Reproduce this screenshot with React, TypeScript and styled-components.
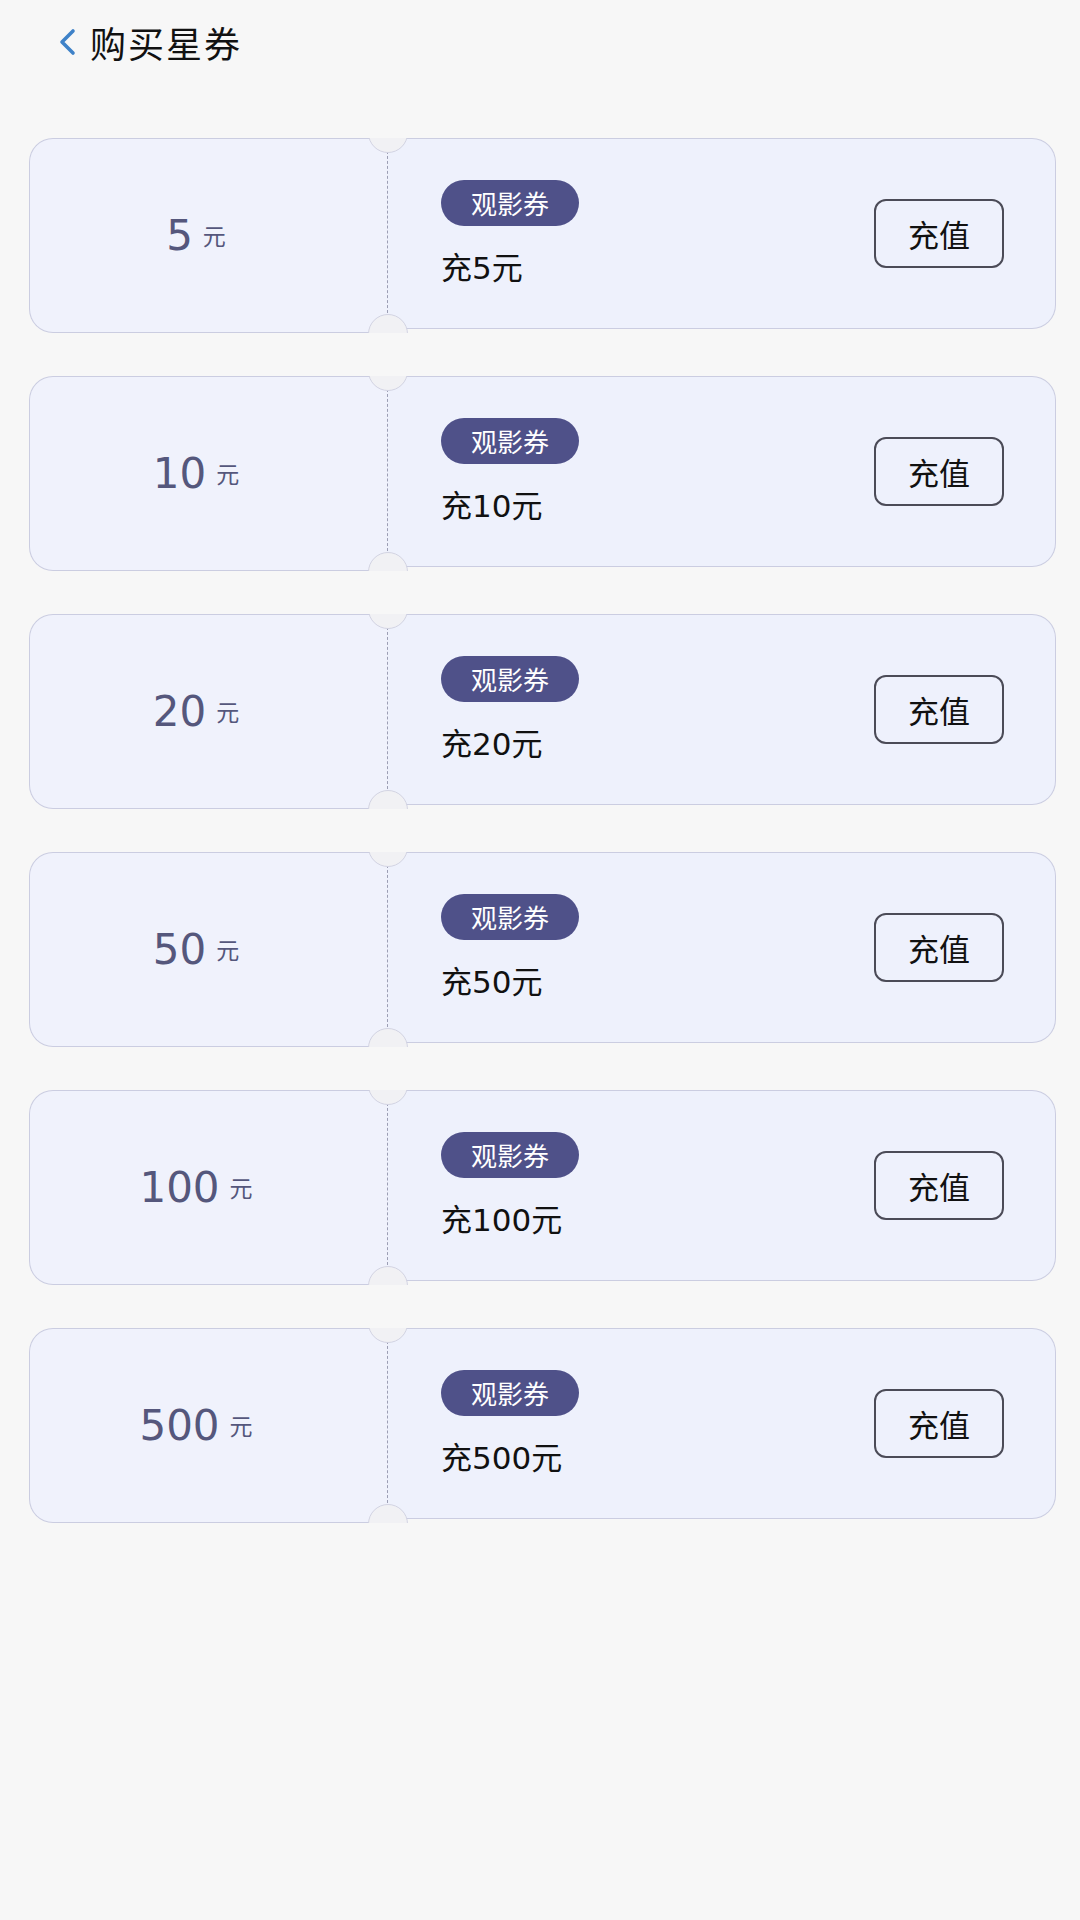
import React from "react";
import styled, { createGlobalStyle } from "styled-components";

const GlobalStyle = createGlobalStyle`
  html, body {
    margin: 0;
    padding: 0;
    background: #f7f7f7;
  }
  body {
    font-family: "Noto Sans CJK SC", "Noto Sans", sans-serif;
    color: #111;
  }
  * { box-sizing: border-box; }
`;

const Page = styled.div`
  width: 1080px;
  min-height: 1920px;
  background: #f7f7f7;
`;

const Header = styled.header`
  height: 84px;
  display: flex;
  align-items: center;
  padding-left: 57px;
  gap: 13px;
`;

const BackIcon = styled.svg`
  width: 20px;
  height: 28px;
  display: block;
`;

const Title = styled.h1`
  margin: 0;
  font-size: 36px;
  line-height: 44px;
  font-weight: 400;
  letter-spacing: 2px;
  color: #111;
`;

const List = styled.main`
  display: flex;
  flex-direction: column;
  gap: 43px;
  padding: 54px 24px 0 29px;
`;

const Ticket = styled.section`
  position: relative;
  display: flex;
  align-items: flex-start;
  height: 195px;
`;

const Stub = styled.div`
  width: 359px;
  height: 195px;
  flex: none;
  display: flex;
  align-items: center;
  justify-content: center;
  padding-right: 26px;
  background: #f0f2fc;
  border: 1.5px solid #cbcde1;
  border-right: none;
  border-radius: 24px 0 0 24px;
`;

const Amount = styled.span`
  font-family: "DejaVu Sans", "Noto Sans", sans-serif;
  font-size: 42px;
  line-height: 1;
  color: #55577c;
`;

const Unit = styled.span`
  margin-left: 10px;
  font-size: 23px;
  line-height: 1;
  color: #55577c;
`;

const Body = styled.div`
  position: relative;
  flex: 1;
  height: 191px;
  display: flex;
  align-items: center;
  justify-content: space-between;
  padding: 0 51px 0 53px;
  background: #eef1fc;
  border: 1.5px solid #cbcde1;
  border-left: none;
  border-radius: 0 24px 24px 0;

  &::before {
    content: "";
    position: absolute;
    left: -1px;
    top: 12px;
    bottom: 10px;
    border-left: 1px dashed #9c9eb4;
  }
`;

const Info = styled.div`
  display: flex;
  flex-direction: column;
  align-items: flex-start;
  gap: 23px;
`;

const Tag = styled.span`
  height: 46px;
  padding: 0 30px;
  border-radius: 23px;
  background: #4f5189;
  color: #fff;
  font-size: 26px;
  line-height: 46px;
`;

const Desc = styled.div`
  font-family: "DejaVu Sans", "Noto Sans CJK SC", sans-serif;
  font-size: 31px;
  line-height: 38px;
  color: #111;
`;

const ChargeButton = styled.button`
  width: 130px;
  height: 69px;
  border: 2px solid #4b4b57;
  border-radius: 12px;
  background: transparent;
  font-family: "Noto Sans CJK SC", sans-serif;
  font-size: 31px;
  color: #111;
  padding: 0;
  cursor: pointer;
`;

const Notch = styled.span<{ $side: "top" | "bottom" }>`
  position: absolute;
  left: 339px;
  width: 40px;
  height: 40px;
  border-radius: 50%;
  background: #f1f1f4;
  border: 1px solid #d2d3e2;
  ${(p) =>
    p.$side === "top"
      ? `top: -25px; clip-path: inset(25px 0 0 0);`
      : `top: 176px; clip-path: inset(0 0 21px 0);`}
`;

const amounts = [5, 10, 20, 50, 100, 500];

export default function App() {
  return (
    <Page>
      <GlobalStyle />
      <Header>
        <BackIcon viewBox="0 0 20 28" fill="none">
          <path
            d="M16 3 L5 14 L16 25"
            stroke="#3f82c8"
            strokeWidth="3.6"
            strokeLinecap="round"
            strokeLinejoin="round"
          />
        </BackIcon>
        <Title>购买星券</Title>
      </Header>
      <List>
        {amounts.map((a) => (
          <Ticket key={a}>
            <Stub>
              <Amount>{a}</Amount>
              <Unit>元</Unit>
            </Stub>
            <Body>
              <Info>
                <Tag>观影券</Tag>
                <Desc>充{a}元</Desc>
              </Info>
              <ChargeButton>充值</ChargeButton>
            </Body>
            <Notch $side="top" />
            <Notch $side="bottom" />
          </Ticket>
        ))}
      </List>
    </Page>
  );
}
